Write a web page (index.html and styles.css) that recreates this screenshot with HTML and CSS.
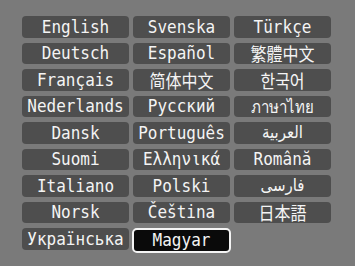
FILE: index.html
```html
<!DOCTYPE html>
<html>
<head>
<meta charset="utf-8">
<link rel="stylesheet" href="styles.css">
</head>
<body>
<div class="screen">
  <div class="grid">
    <div class="btn"><span>English</span></div>
    <div class="btn"><span>Svenska</span></div>
    <div class="btn"><span>Türkçe</span></div>
    <div class="btn"><span>Deutsch</span></div>
    <div class="btn"><span>Español</span></div>
    <div class="btn cjk tc"><span>繁體中文</span></div>
    <div class="btn"><span>Français</span></div>
    <div class="btn cjk sc"><span>简体中文</span></div>
    <div class="btn cjk kr"><span>한국어</span></div>
    <div class="btn"><span>Nederlands</span></div>
    <div class="btn"><span>Русский</span></div>
    <div class="btn thai"><span>ภาษาไทย</span></div>
    <div class="btn"><span>Dansk</span></div>
    <div class="btn"><span>Português</span></div>
    <div class="btn ar"><span>العربية</span></div>
    <div class="btn"><span>Suomi</span></div>
    <div class="btn"><span>Ελληνικά</span></div>
    <div class="btn"><span>Română</span></div>
    <div class="btn"><span>Italiano</span></div>
    <div class="btn"><span>Polski</span></div>
    <div class="btn ar"><span>فارسی</span></div>
    <div class="btn"><span>Norsk</span></div>
    <div class="btn"><span>Čeština</span></div>
    <div class="btn cjk jp"><span>日本語</span></div>
    <div class="btn"><span>Українська</span></div>
    <div class="btn selected"><span>Magyar</span></div>
  </div>
</div>
</body>
</html>
```

FILE: styles.css
```css
html, body {
  margin: 0;
  padding: 0;
}
body {
  background: #7a7a7a;
  width: 355px;
  height: 266px;
  overflow: hidden;
}
.screen {
  padding: 16px 0 0 22px;
}
.grid {
  display: grid;
  grid-template-columns: 107px 97px 97px;
  grid-auto-rows: 21.5px;
  column-gap: 4px;
  row-gap: 5px;
}
.btn {
  background: #4e4e4e;
  border-radius: 4px;
  color: #f4f4f4;
  font-family: "DejaVu Sans Mono", monospace;
  font-size: 16px;
  display: flex;
  align-items: center;
  justify-content: center;
  white-space: nowrap;
  box-sizing: border-box;
  line-height: 1;
}
.btn span {
  display: inline-block;
  transform: scaleY(1.12);
}
.btn.cjk {
  font-size: 16px;
}
.btn.cjk span {
  transform: scaleY(1.15);
}
.tc { font-family: "Noto Sans CJK TC", sans-serif; }
.sc { font-family: "Noto Sans CJK SC", sans-serif; }
.kr { font-family: "Noto Sans CJK KR", sans-serif; }
.jp { font-family: "Noto Sans CJK JP", sans-serif; }
.btn.thai {
  font-family: "Noto Sans", "DejaVu Sans", sans-serif;
  font-size: 15px;
}
.btn.ar {
  font-family: "DejaVu Sans", sans-serif;
  font-size: 15px;
}
.btn.selected {
  background: #0a0a0a;
  border: 2px solid #f4f4f4;
  border-radius: 5px;
  margin: 0 -1px -3px -1px;
}
```
